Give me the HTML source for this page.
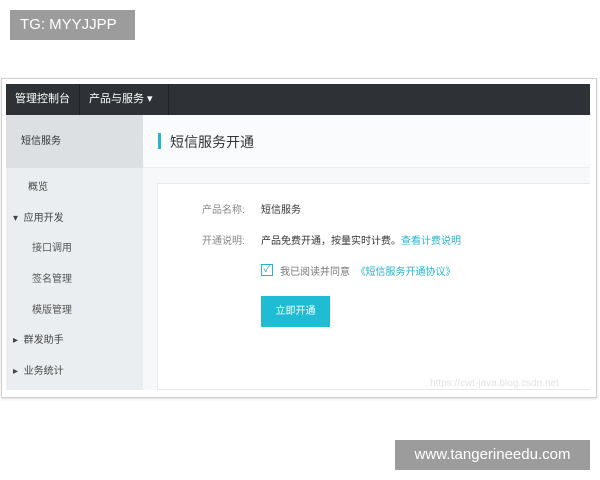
<!DOCTYPE html>
<html><head><meta charset="utf-8"><style>
*{margin:0;padding:0;box-sizing:border-box}
body{width:600px;height:480px;background:#fff;font-family:"Liberation Sans","Noto Sans CJK SC",sans-serif;position:relative;overflow:hidden;font-size:11px}
.a{position:absolute}
</style></head><body>
<div class="a" style="left:10px;top:10px;width:125px;height:30px;background:#9c9c9c;color:#fff;font-size:15px;line-height:30px;padding-left:10px">TG: MYYJJPP</div>
<div class="a" style="left:1px;top:78px;width:596px;height:320px;border:1px solid #cfcfcf;box-shadow:0 1px 2px #ddd"></div>
<div class="a" style="left:6px;top:84px;width:584px;height:31px;background:#2e3236"></div>
<div class="a" style="left:6px;top:84px;width:74px;height:31px;border-right:1px solid #1f2225;color:#fff;line-height:31px;padding-left:9px">管理控制台</div>
<div class="a" style="left:80px;top:84px;width:89px;height:31px;border-right:1px solid #1f2225;color:#fff;line-height:31px;padding-left:9px">产品与服务 ▾</div>
<div class="a" style="left:6px;top:115px;width:137px;height:53px;background:#dce0e3;line-height:53px;padding-left:15px;font-size:10px;color:#333">短信服务</div>
<div class="a" style="left:6px;top:168px;width:137px;height:222px;background:#ebeef0"></div>
<div class="a" style="left:28px;top:178px;color:#444;font-size:10px">概览</div>
<div class="a" style="left:13px;top:209px;color:#444;font-size:10px">▾ &nbsp;应用开发</div>
<div class="a" style="left:32px;top:239px;color:#555;font-size:10px">接口调用</div>
<div class="a" style="left:32px;top:270px;color:#555;font-size:10px">签名管理</div>
<div class="a" style="left:32px;top:301px;color:#555;font-size:10px">模版管理</div>
<div class="a" style="left:13px;top:331px;color:#444;font-size:10px">▸ &nbsp;群发助手</div>
<div class="a" style="left:13px;top:362px;color:#444;font-size:10px">▸ &nbsp;业务统计</div>
<div class="a" style="left:143px;top:115px;width:447px;height:275px;background:#f7f8f9"></div>
<div class="a" style="left:143px;top:115px;width:447px;height:53px;background:#fafbfc;border-bottom:1px solid #eceeef"></div>
<div class="a" style="left:158px;top:133px;width:3px;height:16px;background:#28b3d0"></div>
<div class="a" style="left:170px;top:132px;font-size:14px;color:#333">短信服务开通</div>
<div class="a" style="left:157px;top:183px;width:433px;height:207px;background:#fff;border:1px solid #e8e8e8;border-right:none"></div>
<div class="a" style="left:202px;top:201px;color:#888;font-size:10px">产品名称:</div>
<div class="a" style="left:261px;top:201px;color:#333;font-size:10px">短信服务</div>
<div class="a" style="left:202px;top:232px;color:#888;font-size:10px">开通说明:</div>
<div class="a" style="left:261px;top:232px;color:#333;font-size:10px">产品免费开通，按量实时计费。<span style="color:#28b3d0">查看计费说明</span></div>
<div class="a" style="left:261px;top:264px;width:12px;height:12px;border:1px solid #28b3d0;color:#28b3d0;font-size:10px;line-height:10px;text-align:center">✓</div>
<div class="a" style="left:280px;top:263px;color:#777;font-size:10px">我已阅读并同意 &nbsp;<span style="color:#28b3d0">《短信服务开通协议》</span></div>
<div class="a" style="left:261px;top:296px;width:69px;height:31px;background:#1fbcd4;color:#fff;font-size:10px;line-height:31px;text-align:center">立即开通</div>
<div class="a" style="left:430px;top:378px;color:#e4e4e4;font-size:10px">https://cwt-java.blog.csdn.net</div>
<div class="a" style="left:395px;top:440px;width:195px;height:30px;background:#9c9c9c;color:#fff;font-size:15px;line-height:30px;text-align:center">www.tangerineedu.com</div>
</body></html>
